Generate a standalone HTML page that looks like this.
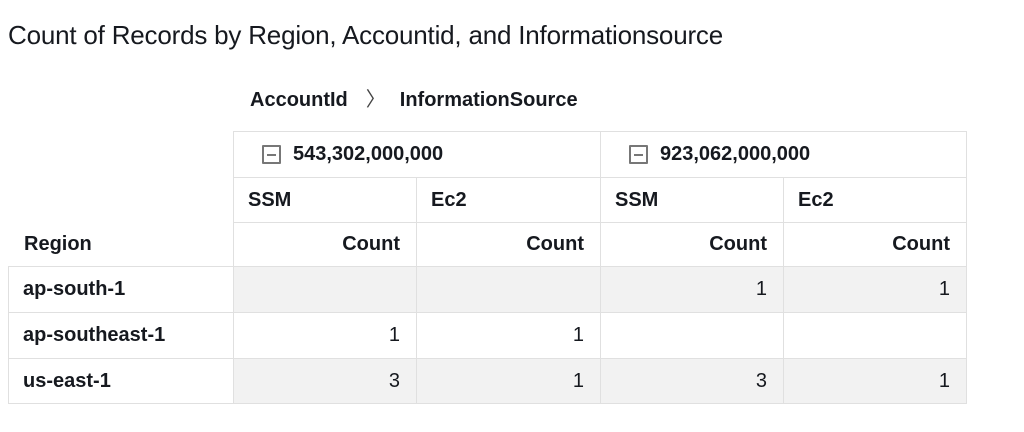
<!DOCTYPE html>
<html><head><meta charset="utf-8"><style>
body{margin:0;width:1024px;height:432px;background:#fff;font-family:"Liberation Sans",sans-serif;color:#16191f;position:relative;overflow:hidden}
.t{position:absolute;left:8px;top:20px;font-size:26px;white-space:nowrap;letter-spacing:-0.2px}
.bc{position:absolute;left:250px;top:83px;font-size:20px;font-weight:bold;white-space:nowrap}
.bc .ch{font-weight:normal;color:#444;margin:0 14px 0 18px;font-size:20px}
.c{position:absolute;box-sizing:border-box;font-size:20px;font-weight:bold;display:flex;align-items:center;padding:0 16px 0 14px;white-space:nowrap}
.r{justify-content:flex-end;font-weight:normal}
.g{background:#f2f2f2}
.b{border:1px solid #e0e0e0}
.ico{display:inline-block;width:19px;height:19px;border:2px solid #777;box-sizing:border-box;position:relative;margin-right:12px;border-radius:1px}
.ico:after{content:"";position:absolute;left:3px;right:3px;top:6.5px;height:2px;background:#777}
</style></head><body>
<div class="t">Count of Records by Region, Accountid, and Informationsource</div>
<div class="bc">AccountId<span class="ch">&#x232A;</span>InformationSource</div>

<div class="c b" style="left:233px;top:131px;width:368px;height:47px;padding-left:28px"><span class="ico"></span>543,302,000,000</div>
<div class="c b" style="left:600px;top:131px;width:367px;height:47px;padding-left:28px"><span class="ico"></span>923,062,000,000</div>

<div class="c b" style="left:233px;top:177px;width:184px;height:46px">SSM</div>
<div class="c b" style="left:416px;top:177px;width:185px;height:46px">Ec2</div>
<div class="c b" style="left:600px;top:177px;width:184px;height:46px">SSM</div>
<div class="c b" style="left:783px;top:177px;width:184px;height:46px">Ec2</div>

<div class="c" style="left:8px;top:222px;width:226px;height:45px;padding-left:16px">Region</div>
<div class="c b" style="left:233px;top:222px;width:184px;height:45px;justify-content:flex-end">Count</div>
<div class="c b" style="left:416px;top:222px;width:185px;height:45px;justify-content:flex-end">Count</div>
<div class="c b" style="left:600px;top:222px;width:184px;height:45px;justify-content:flex-end">Count</div>
<div class="c b" style="left:783px;top:222px;width:184px;height:45px;justify-content:flex-end">Count</div>

<div class="c b" style="left:8px;top:266px;width:226px;height:47px">ap-south-1</div>
<div class="c b r g" style="left:233px;top:266px;width:184px;height:47px"></div>
<div class="c b r g" style="left:416px;top:266px;width:185px;height:47px"></div>
<div class="c b r g" style="left:600px;top:266px;width:184px;height:47px">1</div>
<div class="c b r g" style="left:783px;top:266px;width:184px;height:47px">1</div>

<div class="c b" style="left:8px;top:312px;width:226px;height:47px">ap-southeast-1</div>
<div class="c b r" style="left:233px;top:312px;width:184px;height:47px">1</div>
<div class="c b r" style="left:416px;top:312px;width:185px;height:47px">1</div>
<div class="c b r" style="left:600px;top:312px;width:184px;height:47px"></div>
<div class="c b r" style="left:783px;top:312px;width:184px;height:47px"></div>

<div class="c b" style="left:8px;top:358px;width:226px;height:46px">us-east-1</div>
<div class="c b r g" style="left:233px;top:358px;width:184px;height:46px">3</div>
<div class="c b r g" style="left:416px;top:358px;width:185px;height:46px">1</div>
<div class="c b r g" style="left:600px;top:358px;width:184px;height:46px">3</div>
<div class="c b r g" style="left:783px;top:358px;width:184px;height:46px">1</div>
</body></html>
